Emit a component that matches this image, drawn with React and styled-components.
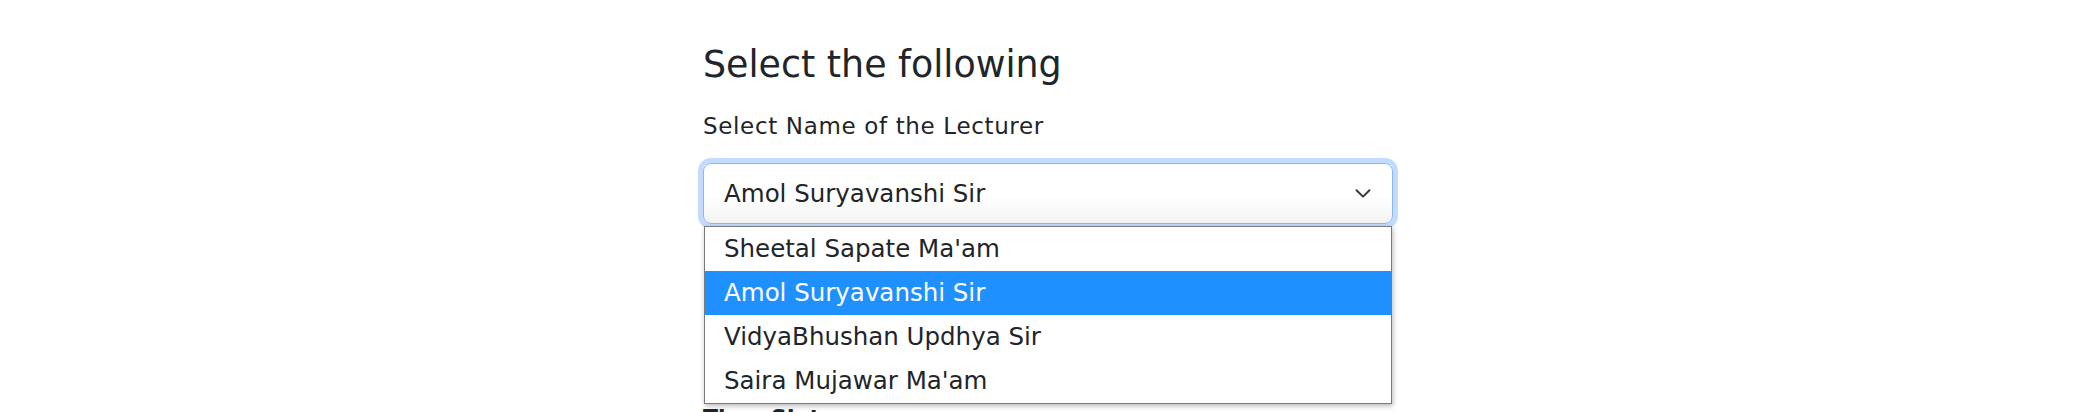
import React from 'react'
import styled, { createGlobalStyle } from 'styled-components'

const GlobalStyle = createGlobalStyle`
	html, body {
		margin: 0;
		padding: 0;
		background: #fff;
	}
	body {
		font-family: "DejaVu Sans", "Noto Sans", "Liberation Sans", sans-serif;
		color: #212529;
	}
`

const PageX = styled.div`
	width: 2096px;
	height: 412px;
	overflow: hidden;
	display: flex;
	justify-content: center;
`

const FormX = styled.div`
	width: 690px;
	padding-top: 43px;
	display: flex;
	flex-direction: column;
`

const HeadingX = styled.h3`
	margin: 0 0 23px;
	font-size: 36.4px;
	font-weight: 400;
	line-height: 44px;
	color: #212529;
`

const FieldX = styled.div`
	display: flex;
	flex-direction: column;
	gap: 20px;
	margin-top: ${props => props.$offset || 0}px;
`

const LabelX = styled.label`
	font-size: ${props => props.$strong ? 22 : 23}px;
	line-height: 33px;
	letter-spacing: ${props => props.$strong ? 0 : 0.65}px;
	font-weight: ${props => props.$strong ? 600 : 400};
	color: #212529;
`

const SelectWrapX = styled.div`
	position: relative;
`

const SelectBoxX = styled.div`
	box-sizing: border-box;
	height: 61px;
	display: flex;
	align-items: center;
	justify-content: space-between;
	padding: 0 21px 0 20px;
	border: 1px solid #86b7fe;
	border-radius: 8px;
	background: linear-gradient(#fff 55%, #f2f2f3);
	box-shadow: 0 0 0 5px rgba(13, 110, 253, 0.25);
	font-size: 24.5px;
	color: #212529;
`

const ChevronX = styled.svg`
	width: 16px;
	height: 9px;
	flex: 0 0 auto;
`

const ListX = styled.ul`
	position: absolute;
	top: calc(100% + 2px);
	left: 1px;
	right: 1px;
	z-index: 2;
	list-style: none;
	margin: 0;
	padding: 0;
	background: #fff;
	border: 1px solid #7a7a7a;
	box-shadow: 1px 2px 5px rgba(0, 0, 0, 0.28);
`

const OptionX = styled.li`
	height: 44px;
	line-height: 44px;
	padding-left: 19px;
	font-size: 24.5px;
	color: ${props => props.$active ? '#fff' : '#212529'};
	background: ${props => props.$active ? '#1e90ff' : 'transparent'};
`

const lecturers = [
	'Sheetal Sapate Ma\'am',
	'Amol Suryavanshi Sir',
	'VidyaBhushan Updhya Sir',
	'Saira Mujawar Ma\'am'
]

const App = () => {

	const current = 'Amol Suryavanshi Sir'

	return (
		<PageX>
			<GlobalStyle />
			<FormX>
				<HeadingX>Select the following</HeadingX>

				<FieldX>
					<LabelX>Select Name of the Lecturer</LabelX>
					<SelectWrapX>
						<SelectBoxX>
							<span>{current}</span>
							<ChevronX viewBox="0 0 16 9">
								<path d="M1.5 1.2 8 7.6 14.5 1.2" fill="none" stroke="#343a40" strokeWidth="2" strokeLinecap="round" strokeLinejoin="round" />
							</ChevronX>
						</SelectBoxX>
						<ListX>
							{lecturers.map( name => (
								<OptionX key={name} $active={name === current}>{name}</OptionX>
							) )}
						</ListX>
					</SelectWrapX>
				</FieldX>

				<FieldX $offset={177}>
					<LabelX $strong>Time Slot</LabelX>
				</FieldX>
			</FormX>
		</PageX>
	)

}

export default App
